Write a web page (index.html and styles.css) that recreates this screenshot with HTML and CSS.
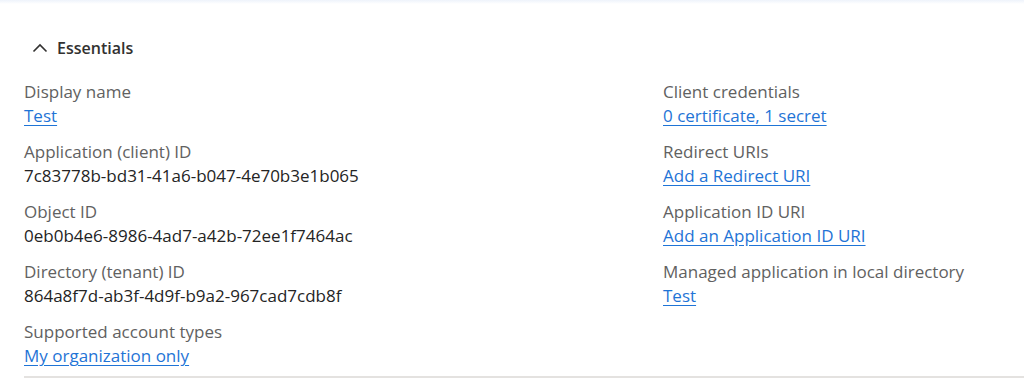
FILE: index.html
```html
<!DOCTYPE html>
<html lang="en">

<head>
    <title>Overview</title>
    <meta charset="UTF-8" />
    <meta name="viewport" content="width=device-width, initial-scale=1.0" />
    <link rel="stylesheet" href="styles.css">
</head>

<body>
    <div class="top-edge"></div>
    <section class="essentials">
        <button class="toggle" type="button">
            <svg width="16" height="10" viewBox="0 0 16 10" aria-hidden="true">
                <path d="M1.5 8.5 L8 2 L14.5 8.5" fill="none" stroke="#323130" stroke-width="1.6" />
            </svg>
            <span>Essentials</span>
        </button>
        <div class="grid">
            <div class="column">
                <div class="field">
                    <div class="label">Display name</div>
                    <a class="value link" href="#">Test</a>
                </div>
                <div class="field">
                    <div class="label">Application (client) ID</div>
                    <div class="value">7c83778b-bd31-41a6-b047-4e70b3e1b065</div>
                </div>
                <div class="field">
                    <div class="label">Object ID</div>
                    <div class="value">0eb0b4e6-8986-4ad7-a42b-72ee1f7464ac</div>
                </div>
                <div class="field">
                    <div class="label">Directory (tenant) ID</div>
                    <div class="value">864a8f7d-ab3f-4d9f-b9a2-967cad7cdb8f</div>
                </div>
                <div class="field">
                    <div class="label">Supported account types</div>
                    <a class="value link" href="#">My organization only</a>
                </div>
            </div>
            <div class="column">
                <div class="field">
                    <div class="label">Client credentials</div>
                    <a class="value link" href="#">0 certificate, 1 secret</a>
                </div>
                <div class="field">
                    <div class="label">Redirect URIs</div>
                    <a class="value link" href="#">Add a Redirect URI</a>
                </div>
                <div class="field">
                    <div class="label">Application ID URI</div>
                    <a class="value link" href="#">Add an Application ID URI</a>
                </div>
                <div class="field">
                    <div class="label">Managed application in local directory</div>
                    <a class="value link" href="#">Test</a>
                </div>
            </div>
        </div>
    </section>
</body>

</html>
```

FILE: styles.css
```css
body {
    margin: 0;
    background-color: #fff;
    color: #323130;
    font-family: "Segoe UI", "Open Sans", "Noto Sans", sans-serif;
    font-size: 17px;
}

.top-edge {
    height: 4px;
    background: linear-gradient(#eef3fb, #fff);
}

.essentials {
    margin-left: 24px;
    padding-top: 32px;
    border-bottom: 2px solid #e4e2e0;
    padding-bottom: 8px;
}

.toggle {
    display: flex;
    align-items: center;
    gap: 9px;
    padding: 0 0 0 8px;
    border: none;
    background: none;
    font: inherit;
    font-size: 16px;
    font-weight: 600;
    color: #323130;
    height: 24px;
    cursor: pointer;
}

.grid {
    display: grid;
    grid-template-columns: 639px 1fr;
    margin-top: 20px;
}

.column {
    display: flex;
    flex-direction: column;
    gap: 12px;
}

.field {
    display: flex;
    flex-direction: column;
    align-items: flex-start;
    line-height: 24px;
}

.label {
    color: #616161;
}

.value {
    color: #242424;
}

.link {
    color: #1f74d6;
    text-decoration: underline;
    text-underline-offset: 3px;
}
```
